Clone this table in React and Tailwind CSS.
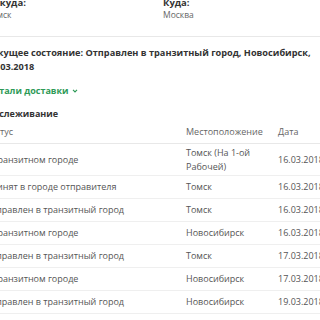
import React from "react";

const rows = [
  { s: "В транзитном городе", l: ["Томск (На 1-ой", "Рабочей)"], d: "16.03.2018", two: true },
  { s: "Принят в городе отправителя", l: ["Томск"], d: "16.03.2018" },
  { s: "Отправлен в транзитный город", l: ["Томск"], d: "16.03.2018" },
  { s: "В транзитном городе", l: ["Новосибирск"], d: "16.03.2018" },
  { s: "Отправлен в транзитный город", l: ["Томск"], d: "17.03.2018" },
  { s: "В транзитном городе", l: ["Новосибирск"], d: "17.03.2018" },
  { s: "Отправлен в транзитный город", l: ["Новосибирск"], d: "19.03.2018" },
];

export default function App() {
  return (
    <div className="w-[320px] h-[320px] overflow-hidden bg-white" style={{ fontFamily: '"Open Sans", sans-serif' }}>
      <div className="ml-[-13px] w-[360px] mt-[-3px]">
        <div className="flex pb-[15px] border-b border-[#e8e8e8]">
          <div className="w-[176px]">
            <div className="text-[9.5px] leading-[11px] font-bold text-[#333]">Откуда:</div>
            <div className="text-[8.5px] leading-[13px] text-[#666]">Томск</div>
          </div>
          <div>
            <div className="text-[9.5px] leading-[11px] font-bold text-[#333]">Куда:</div>
            <div className="text-[8.5px] leading-[13px] text-[#666]">Москва</div>
          </div>
        </div>
        <div className="pt-[9px] w-[330px] text-[9.2px] leading-[14px] font-bold text-[#333]">
          Текущее состояние: Отправлен в транзитный город, Новосибирск, 16.03.2018
        </div>
        <div className="pt-[10px] flex items-center gap-[3px] text-[9px] leading-[13px] font-bold text-[#2e9a57]">
          Детали доставки
          <svg width="6" height="4" viewBox="0 0 7 5" fill="none"><path d="M1 1l2.5 2.5L6 1" stroke="#2e9a57" strokeWidth="1.5" /></svg>
        </div>
        <div className="pt-[10px] text-[9px] leading-[13px] font-bold text-[#333]">Отслеживание</div>
        <div className="flex h-[24px] items-center border-b border-[#e8e8e8] text-[9px] text-[#666]">
          <div className="w-[201px] ml-[-2px]">Статус</div>
          <div className="w-[92px]">Местоположение</div>
          <div>Дата</div>
        </div>
        {rows.map((r, i) => (
          <div key={i} className={`flex items-center border-b border-[#efefef] text-[9px] text-[#555] ${r.two ? "h-[32px]" : "h-[23px]"}`}>
            <div className="w-[201px] ml-[-2px]">{r.s}</div>
            <div className="w-[92px] leading-[14px]">
              {r.l.map((t, j) => (
                <div key={j}>{t}</div>
              ))}
            </div>
            <div>{r.d}</div>
          </div>
        ))}
      </div>
    </div>
  );
}
